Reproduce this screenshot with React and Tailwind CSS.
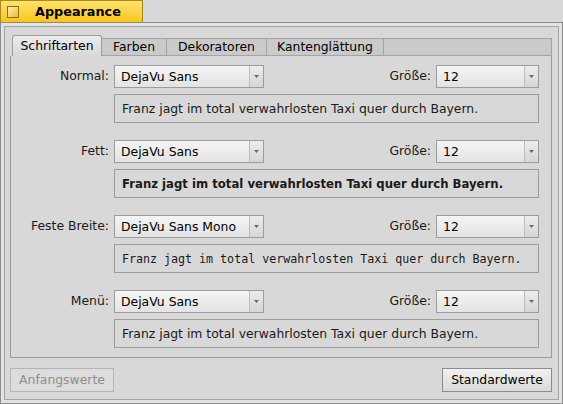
import React from 'react';

const FONT = "font-['DejaVu_Sans',sans-serif]";

const rows = [
  { label: 'Normal:', font: 'DejaVu Sans', style: 'text-[12.4px]' },
  { label: 'Fett:', font: 'DejaVu Sans', style: 'font-bold text-[11.7px]' },
  { label: 'Feste Breite:', font: 'DejaVu Sans Mono', style: "font-['DejaVu_Sans_Mono',monospace] text-[11.65px]" },
  { label: 'Menü:', font: 'DejaVu Sans', style: 'text-[12.4px]' },
];

const Arrow = () => (
  <svg width="5" height="3" viewBox="0 0 5 3">
    <path d="M0 0 H5 L2.5 3 Z" fill="#6a6a6a" />
  </svg>
);

// popup menu field
const Dropdown = ({ value, width }) => (
  <div className={`flex h-[23px] ${width} border border-[#9c9c9c] bg-gradient-to-b from-[#f5f5f5] to-[#e3e3e3]`}>
    <span className="flex-1 pl-[6px] leading-[21px] text-black">{value}</span>
    <span className="flex w-[14px] items-center justify-center border-l border-[#bdbdbd] bg-gradient-to-b from-[#ececec] to-[#d6d6d6]">
      <Arrow />
    </span>
  </div>
);

const FontRow = ({ row, first }) => (
  <div className={first ? 'mt-[9px]' : 'mt-[17px]'}>
    <div className="flex items-center">
      <span className="w-[98px] text-right">{row.label}</span>
      <div className="ml-[5px]">
        <Dropdown value={row.font} width="w-[150px]" />
      </div>
      <div className="flex-1" />
      <span>Größe:</span>
      <div className="ml-[5px] mr-[12px]">
        <Dropdown value="12" width="w-[103px]" />
      </div>
    </div>
    <div className="ml-[103px] mr-[12px] mt-[6px] h-[29px] border border-[#9c9c9c] bg-[#d8d8d8] pl-[7px] leading-[27px]">
      <span className={row.style}>Franz jagt im total verwahrlosten Taxi quer durch Bayern.</span>
    </div>
  </div>
);

const tabs = [
  { name: 'Farben', w: 'w-[65px]' },
  { name: 'Dekoratoren', w: 'w-[100px]' },
  { name: 'Kantenglättung', w: 'w-[117px]' },
];

const App = () => {
  return (
    <div className={`${FONT} flex h-[404px] w-[563px] flex-col bg-[#d8d8d8] text-[12.4px] text-[#1a1a1a]`}>
      {/* title tab */}
      <div className="flex h-[22px] w-[143px] items-center border border-b-0 border-[#a88b1c] bg-gradient-to-b from-[#ffe26a] to-[#fcc500]">
        <span className="ml-[6px] h-[12px] w-[12px] border border-[#8c7010] bg-gradient-to-br from-[#fff2b0] to-[#f2b800]" />
        <span className="ml-[16px] text-[12.8px] font-bold text-black">Appearance</span>
      </div>

      {/* window frame */}
      <div className="flex-1 border border-[#8c8c8c] bg-[#e2e2e2] p-[3px]">
        <div className="flex h-full flex-col border border-[#a4a4a4] bg-[#d8d8d8] pl-[5px] pr-[6px] pt-[8px]">
          {/* tab bar */}
          <div className="flex h-[21px] items-end">
            <div className="ml-[2px] flex h-[21px] w-[90px] items-center justify-center rounded-t-[3px] border border-b-0 border-[#9c9c9c] bg-gradient-to-b from-[#ececec] to-[#d8d8d8] text-black">
              Schriftarten
            </div>
            {tabs.map((t) => (
              <div key={t.name} className={`flex h-[18px] ${t.w} items-center justify-center border-r border-t border-[#a4a4a4] border-b bg-[#cacaca] text-black`}>
                {t.name}
              </div>
            ))}
            <div className="h-[18px] flex-1 border-b border-r border-t border-[#a4a4a4] bg-[#cacaca]" />
          </div>

          {/* tab content */}
          <div className="h-[302px] border border-t-0 border-[#9c9c9c] bg-[#d8d8d8]">
            {rows.map((r, i) => (
              <FontRow key={r.label} row={r} first={i === 0} />
            ))}
          </div>

          {/* buttons */}
          <div className="mt-[10px] flex justify-between">
            <button className="h-[24px] w-[104px] border border-[#b4b4b4] bg-[#dcdcdc] text-[#8e8e8e]">Anfangswerte</button>
            <button className="h-[24px] w-[110px] border border-[#8c8c8c] bg-gradient-to-b from-[#f2f2f2] to-[#dadada] text-black">Standardwerte</button>
          </div>
        </div>
      </div>
    </div>
  );
};

export default App;
